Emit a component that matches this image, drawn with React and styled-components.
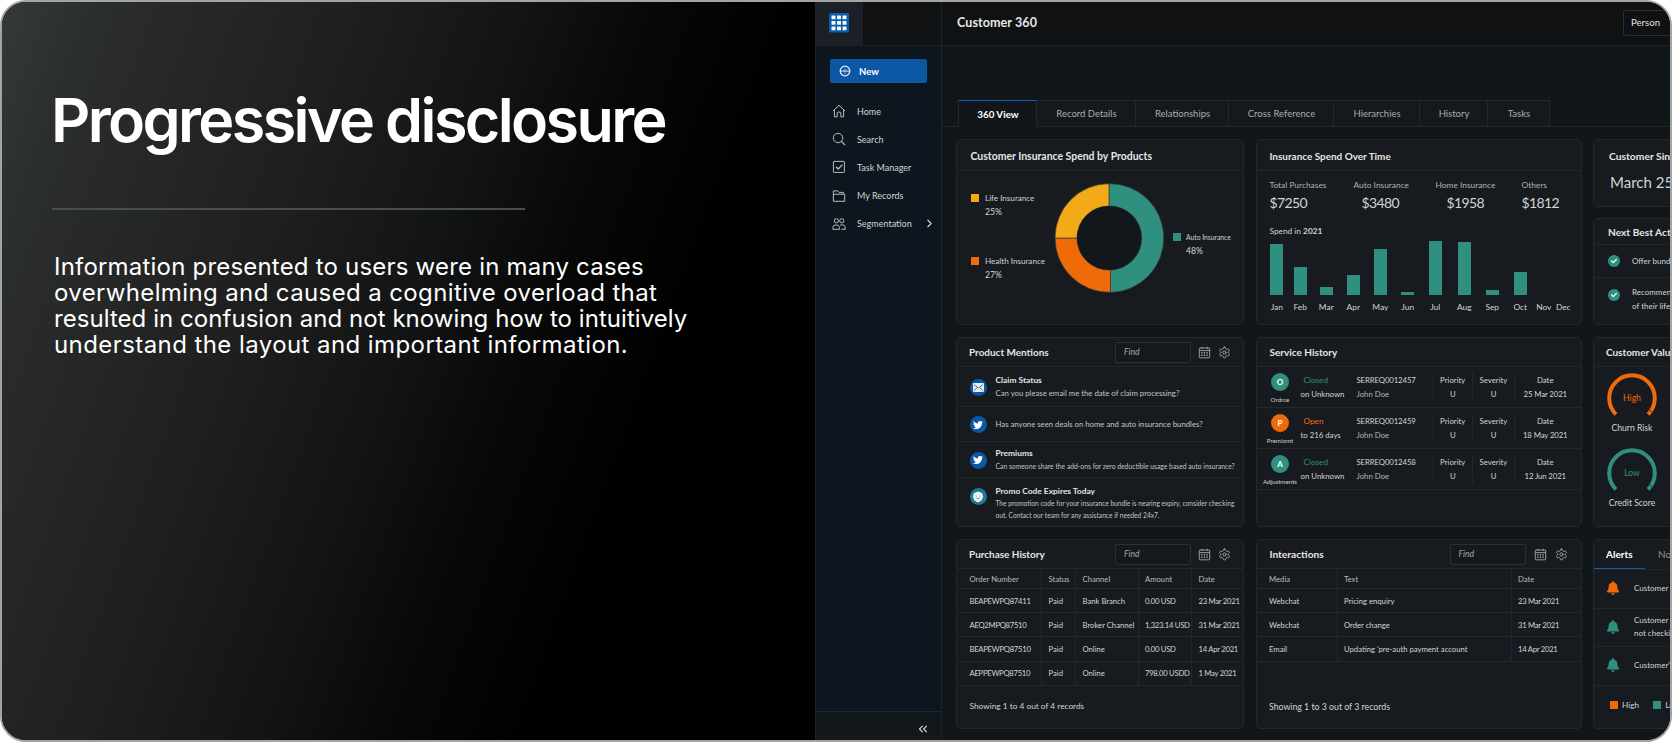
import React from 'react'
import styled, { createGlobalStyle, css } from 'styled-components'
import {
  LuChevronRight,
  LuChevronsLeft,
  LuSettings,
} from 'react-icons/lu'
import { FaTwitter, FaBell, FaCheck } from 'react-icons/fa'

const teal = '#2f9080'
const orange = '#ef6a08'
const yellow = '#f3aa18'
const blue = '#0b57a4'
const line = '#22272a'

const GlobalStyle = createGlobalStyle`
  * {
    box-sizing: border-box;
  }
  body {
    margin: 0;
    background: #fff;
    overflow: hidden;
  }
  h1, h2, h3, p {
    margin: 0;
  }
`

const HomeIcon = () => (
  <NavSvg viewBox="0 0 14 14">
    <path d="M1 7 L7 1.3 L13 7 M2.4 6 V12.8 H5.2 V9 Q5.2 8 7 8 Q8.8 8 8.8 9 V12.8 H11.6 V6" />
  </NavSvg>
)

const SearchIcon = () => (
  <NavSvg viewBox="0 0 14 14">
    <circle cx="6" cy="6" r="4.7" />
    <path d="M9.4 9.4 L13 13" strokeWidth="1.2" />
  </NavSvg>
)

const TaskIcon = () => (
  <NavSvg viewBox="0 0 14 14">
    <rect x="1.4" y="1.4" width="11" height="11" rx="0.6" />
    <path d="M4 6.8 L6.2 9 L10.4 4.6" strokeWidth="1.3" />
  </NavSvg>
)

const FolderIcon = () => (
  <NavSvg viewBox="0 0 14 14">
    <path d="M1.4 12.3 V1.9 H5.6 L7 3.4 H11.4 V5.2 M1.4 12.3 H12.7 V5.2 H3.4 L1.4 6" />
  </NavSvg>
)

const PeopleIcon = () => (
  <NavSvg viewBox="0 0 14 14">
    <circle cx="4.4" cy="3.8" r="2.1" />
    <circle cx="9.8" cy="3.8" r="2.1" />
    <path d="M0.9 12.3 V10.4 Q0.9 7.9 4.2 7.9 Q7.4 7.9 7.4 10.4 V12.3 Z M8.2 8 Q13.2 7.3 13.2 10.4 V12.3 H9.4" />
  </NavSvg>
)

const CalendarIcon = () => (
  <svg width="13" height="13" viewBox="0 0 13 13" fill="none" stroke="currentColor">
    <rect x="1.3" y="2" width="10.4" height="9.8" rx="0.8" strokeWidth="0.9" />
    <path d="M1.3 4.6 H11.7 M3.8 0.8 V3 M9.2 0.8 V3" strokeWidth="0.9" />
    <path d="M3.2 6.7 H10 M3.2 9.2 H10" strokeWidth="1.4" strokeDasharray="1.3 1.3" />
  </svg>
)

const navItems = [
  { icon: HomeIcon, label: 'Home' },
  { icon: SearchIcon, label: 'Search' },
  { icon: TaskIcon, label: 'Task Manager' },
  { icon: FolderIcon, label: 'My Records' },
  { icon: PeopleIcon, label: 'Segmentation', more: true },
]

const tabs = [
  { label: '360 View', width: 79, active: true },
  { label: 'Record Details', width: 99 },
  { label: 'Relationships', width: 93 },
  { label: 'Cross Reference', width: 105 },
  { label: 'Hierarchies', width: 86 },
  { label: 'History', width: 68 },
  { label: 'Tasks', width: 62 },
]

const stats = [
  { label: 'Total Purchases', value: '$7250', width: 84 },
  { label: 'Auto Insurance', value: '$3480', width: 82, indent: 8 },
  { label: 'Home Insurance', value: '$1958', width: 86, indent: 11 },
  { label: 'Others', value: '$1812', width: 50 },
]

const months = [
  { name: 'Jan', value: 51 },
  { name: 'Feb', value: 28 },
  { name: 'Mar', value: 8 },
  { name: 'Apr', value: 20 },
  { name: 'May', value: 46 },
  { name: 'Jun', value: 3 },
  { name: 'Jul', value: 54 },
  { name: 'Aug', value: 53 },
  { name: 'Sep', value: 5 },
  { name: 'Oct', value: 23 },
  { name: 'Nov', value: 0 },
  { name: 'Dec', value: 0 },
]

const services = [
  { letter: 'O', name: 'Ordrce', status: 'Closed', since: 'on Unknown', id: 'SERREQ0012457', date: '25 Mar 2021', color: teal },
  { letter: 'P', name: 'Premiomt', status: 'Open', since: 'to 216 days', id: 'SERREQ0012459', date: '18 May 2021', color: orange },
  { letter: 'A', name: 'Adjustments', status: 'Closed', since: 'on Unknown', id: 'SERREQ0012458', date: '12 Jun 2021', color: teal },
]

const purchases = [
  ['BEAPEWPQ87411', 'Paid', 'Bank Branch', '0.00 USD', '23 Mar 2021'],
  ['AEQ2MPQ87510', 'Paid', 'Broker Channel', '1,323.14 USD', '31 Mar 2021'],
  ['BEAPEWPQ87510', 'Paid', 'Online', '0.00 USD', '14 Apr 2021'],
  ['AEPPEWPQ87510', 'Paid', 'Online', '798.00 USDD', '1 May 2021'],
]

const interactions = [
  ['Webchat', 'Pricing enquiry', '23 Mar 2021'],
  ['Webchat', 'Order change', '31 Mar 2021'],
  ['Email', "Updating 'pre-auth payment account", '14 Apr 2021'],
]

const SearchTools = ({ gap }) => (
  <Tools $gap={gap}>
    <Find>Find</Find>
    <CalendarIcon />
    <LuSettings size={13} strokeWidth={1.8} />
  </Tools>
)

const Table = ({ columns, head, rows }) => (
  <div>
    <TableRow $columns={columns} $head>
      {head.map((cell) => <Cell key={cell}>{cell}</Cell>)}
    </TableRow>
    {rows.map((row, i) => (
      <TableRow $columns={columns} key={i}>
        {row.map((cell, j) => <Cell key={j} $numeric={/\d/.test(cell)}>{cell}</Cell>)}
      </TableRow>
    ))}
  </div>
)

const Donut = () => (
  <svg width="110" height="110" viewBox="-55 -55 110 110">
    <g stroke="#3a3a30" strokeWidth="0.7">
      <path d="M0 -54.3 A54 54.3 0 0 1 1.5 54.3 L1.5 32 A32 32 0 0 0 0 -32 Z" fill={teal} />
      <path d="M1.5 54.3 A54.3 54.3 0 0 1 -54 0 L-32 0 A32 32 0 0 0 1.5 32 Z" fill={orange} />
      <path d="M-54 0 A54 54.3 0 0 1 0 -54.3 L0 -32 A32 32 0 0 0 -32 0 Z" fill={yellow} />
    </g>
    <circle r="31.8" fill="#12171b" />
  </svg>
)

const Gauge = ({ color, level, label }) => (
  <GaugeBox>
    <svg width="52" height="46" viewBox="-26 -26 52 46">
      <path d="M-16 16.4 A22.8 22.8 0 1 1 16 16.4" fill="none" stroke={color} strokeWidth="4" />
      <path d="M16.5 11.5 L20 14" stroke="#1a1d20" strokeWidth="0.7" />
      <text x="0" y="3.2" textAnchor="middle" fontSize="8.6" fill={color}>{level}</text>
    </svg>
    <GaugeLabel>{label}</GaugeLabel>
  </GaugeBox>
)

const Mail = () => (
  <svg width="11" height="9" viewBox="0 0 11 9">
    <rect width="11" height="9" rx="1" fill="#e9eef2" />
    <path d="M1 1.6 L5.5 5 L10 1.6 M1.2 7.7 L4 4.6 M9.8 7.7 L7 4.6" fill="none" stroke="#46616f" strokeWidth="0.9" />
  </svg>
)

const Chat = () => (
  <svg width="12" height="12" viewBox="0 0 12 12">
    <path d="M6 .6 L8 1.2 L10.2 2.2 L11.1 5.6 L9.8 9.2 L6 11.4 L2.2 9.2 L.9 5.6 L1.8 2.2 L4 1.2 Z" fill="#eef2f2" />
    <path d="M4.3 4.6 v1 M7.7 4.6 v1 M4.4 7 Q6 8.4 7.6 7" fill="none" stroke="#5d8f94" strokeWidth="0.9" />
  </svg>
)

const GridLogo = () => (
  <svg width="20" height="20" viewBox="0 0 20 20">
    <rect width="20" height="19.5" rx="1.5" fill="#0d5cad" />
    {[2.5, 8, 13.5].map((y) => [2.5, 8, 13.5].map((x) => (
      <rect key={`${x}-${y}`} x={x} y={y} width="4" height="3.8" rx="0.5" fill="#f2f6fa" />
    )))}
  </svg>
)

const NewIcon = () => (
  <svg width="12" height="12" viewBox="0 0 12 12" fill="none" stroke="#e5edf5">
    <circle cx="6" cy="6" r="4.8" strokeWidth="1.3" />
    <path d="M1 6 h10" strokeWidth="1.2" />
    <path d="M6 3 v6" strokeWidth="0.9" opacity="0.6" />
  </svg>
)

const App = () => {
  return (
    <Frame>
      <GlobalStyle />
      <Intro>
        <Heading>Progressive disclosure</Heading>
        <Rule />
        <Lead>
          <LeadLine $spacing="0.2px">Information presented to users were in many cases</LeadLine>
          <LeadLine $spacing="0.38px">overwhelming and caused a cognitive overload that</LeadLine>
          <LeadLine $spacing="0.05px">resulted in confusion and not knowing how to intuitively</LeadLine>
          <LeadLine $spacing="0.42px">understand the layout and important information.</LeadLine>
        </Lead>
      </Intro>

      <Dashboard>
        <Sidebar>
          <Brand>
            <BrandTile><GridLogo /></BrandTile>
          </Brand>
          <NewButton><NewIcon />New</NewButton>
          <Nav>
            {navItems.map(({ icon: Icon, label, more }) => (
              <NavItem key={label}>
                <Icon />
                <span>{label}</span>
                {more && <LuChevronRight size={13} strokeWidth={2.2} />}
              </NavItem>
            ))}
          </Nav>
          <Collapse><LuChevronsLeft size={14} /></Collapse>
        </Sidebar>

        <Main>
          <TopBar>
            <PageTitle>Customer 360</PageTitle>
            <PersonButton>Person</PersonButton>
          </TopBar>
          <Tabs>
            {tabs.map((tab) => (
              <Tab key={tab.label} $width={tab.width} $active={tab.active}>{tab.label}</Tab>
            ))}
          </Tabs>

          <Board>
            <Card>
              <CardHeader $height={31} $pad={13.5} $top={1}><Title $size={10.45}>Customer Insurance Spend by Products</Title></CardHeader>
              <SpendBody>
                <LegendColumn>
                  <Legend><Swatch $color={yellow} /><div>Life Insurance<Percent>25%</Percent></div></Legend>
                  <Legend><Swatch $color={orange} /><div>Health Insurance<Percent>27%</Percent></div></Legend>
                </LegendColumn>
                <Donut />
                <Legend $small><Swatch $color={teal} /><div>Auto Insurance<Percent>48%</Percent></div></Legend>
              </SpendBody>
            </Card>

            <Card>
              <CardHeader $height={31} $pad={13} $top={1}><Title>Insurance Spend Over Time</Title></CardHeader>
              <Stats>
                {stats.map((s) => (
                  <Stat key={s.label} $width={s.width}>
                    <StatLabel>{s.label}</StatLabel>
                    <StatValue $indent={s.indent}>{s.value}</StatValue>
                  </Stat>
                ))}
              </Stats>
              <ChartTitle>Spend in <b>2021</b></ChartTitle>
              <Chart>
                {months.map((m) => (
                  <Month key={m.name}>
                    <Bar style={{ height: m.value }} />
                    <span>{m.name}</span>
                  </Month>
                ))}
              </Chart>
            </Card>

            <Stack>
              <Card>
                <SinceTitle $size={10.3}>Customer Since</SinceTitle>
                <SinceDate>March 25</SinceDate>
              </Card>
              <Card>
                <CardHeader $height={26} $pad={14}><Title $size={10.2}>Next Best Actions</Title></CardHeader>
                <Action $height={33}><Check><FaCheck size={6} /></Check><span>Offer bundle</span></Action>
                <Action $height={46} $top><Check><FaCheck size={6} /></Check><span>Recommend<br />of their life</span></Action>
              </Card>
            </Stack>

            <Card>
              <CardHeader $height={29} $pad={12}>
                <Title>Product Mentions</Title>
                <SearchTools />
              </CardHeader>
              <Mention $height={40}>
                <Badge><Mail /></Badge>
                <div>
                  <MentionTitle>Claim Status</MentionTitle>
                  <MentionText>Can you please email me the date of claim processing?</MentionText>
                </div>
              </Mention>
              <Mention $height={35}>
                <Badge><FaTwitter size={10} /></Badge>
                <MentionText>Has anyone seen deals on home and auto insurance bundles?</MentionText>
              </Mention>
              <Mention $height={37}>
                <Badge><FaTwitter size={10} /></Badge>
                <div>
                  <MentionTitle>Premiums</MentionTitle>
                  <MentionText $size={6.78}>Can someone share the add-ons for zero deductible usage based auto insurance?</MentionText>
                </div>
              </Mention>
              <Mention $height={48} $top>
                <Badge $ring><Chat /></Badge>
                <div>
                  <MentionTitle>Promo Code Expires Today</MentionTitle>
                  <MentionText $size={6.65} $leading={11.7}>
                    The promotion code for your insurance bundle is nearing expiry, consider checking<br />
                    out. Contact our team for any assistance if needed 24x7.
                  </MentionText>
                </div>
              </Mention>
            </Card>

            <Card>
              <CardHeader $height={29} $pad={13}><Title $size={10}>Service History</Title></CardHeader>
              {services.map((s) => (
                <Service key={s.id}>
                  <ServiceKind>
                    <Avatar $color={s.color}>{s.letter}</Avatar>
                    <span>{s.name}</span>
                  </ServiceKind>
                  <ServiceCell>
                    <Status $color={s.color}>{s.status}</Status>
                    <span>{s.since}</span>
                  </ServiceCell>
                  <ServiceCell><Code>{s.id}</Code><Muted>John Doe</Muted></ServiceCell>
                  <ServiceCell $center><span>Priority</span><span>U</span></ServiceCell>
                  <ServiceCell $center><span>Severity</span><span>U</span></ServiceCell>
                  <ServiceCell $center $last><span>Date</span><Code>{s.date}</Code></ServiceCell>
                </Service>
              ))}
            </Card>

            <Card>
              <CardHeader $height={29} $pad={12}><Title>Customer Value</Title></CardHeader>
              <Gauges>
                <Gauge color={orange} level="High" label="Churn Risk" />
                <Gauge color={teal} level="Low" label="Credit Score" />
              </Gauges>
            </Card>

            <Card>
              <CardHeader $height={29} $pad={12}>
                <Title>Purchase History</Title>
                <SearchTools />
              </CardHeader>
              <Table
                columns="84px 34px 62.5px 53.5px 52px"
                head={['Order Number', 'Status', 'Channel', 'Amount', 'Date']}
                rows={purchases}
              />
              <Records $size={8.3}>Showing 1 to 4 out of 4 records</Records>
            </Card>

            <Card>
              <CardHeader $height={29} $pad={13}>
                <Title $size={10.2}>Interactions</Title>
                <SearchTools gap />
              </CardHeader>
              <Table
                columns="80px 174px 70px"
                head={['Media', 'Text', 'Date']}
                rows={interactions}
              />
              <Records $size={8.75}>Showing 1 to 3 out of 3 records</Records>
            </Card>

            <Card>
              <AlertTabs>
                <AlertTab $active>Alerts</AlertTab>
                <AlertTab>Notes</AlertTab>
              </AlertTabs>
              <Alert><FaBell size={14} color={orange} /><span>Customer</span></Alert>
              <Alert><FaBell size={14} color={teal} /><span>Customer<br />not checking</span></Alert>
              <Alert><FaBell size={14} color={teal} /><span>Customer's</span></Alert>
              <AlertKey>
                <Swatch $color={orange} /><span>High</span>
                <Swatch $color={teal} /><span>Low</span>
              </AlertKey>
            </Card>
          </Board>
        </Main>
      </Dashboard>
    </Frame>
  )
}

const Frame = styled.div`
  display: flex;
  width: 1672px;
  height: 742px;
  border: 2px solid #a3a5a5;
  border-radius: 26px;
  overflow: hidden;
  background: #000;
`

const Intro = styled.section`
  flex: 0 0 813px;
  padding: 80px 0 0 50px;
  font-family: Inter, sans-serif;
  color: #fff;
  background: linear-gradient(110deg, #343939 0%, #2c2f2f 8%, #272828 17%, #1e1e1e 34%, #121314 49%, #080808 60%, #000 74%);
`

const Heading = styled.h1`
  font-size: 61px;
  line-height: 76px;
  font-weight: 600;
  letter-spacing: -2.62px;
  margin-left: -1px;
  white-space: nowrap;
`

const Rule = styled.div`
  width: 473px;
  height: 2px;
  margin-top: 50px;
  background: #484d4e;
`

const Lead = styled.div`
  margin-top: 44px;
  padding-left: 2px;
`

const LeadLine = styled.p`
  font-size: 24px;
  line-height: 26px;
  font-weight: 400;
  letter-spacing: ${(p) => p.$spacing};
  white-space: nowrap;
`

const Dashboard = styled.div`
  flex: 1;
  display: flex;
  min-width: 0;
  font-family: Lato, sans-serif;
  font-size: 8.2px;
  color: #d2d4d5;
  background: #11161a;
`

const Sidebar = styled.aside`
  flex: 0 0 127px;
  display: flex;
  flex-direction: column;
  background: #0d151e;
  border-left: 1px solid #1b2126;
  border-right: 1px solid #1c242b;
`

const Brand = styled.div`
  height: 44px;
  background: #0f1113;
  border-bottom: 1px solid #192026;
`

const BrandTile = styled.div`
  display: flex;
  width: 47px;
  height: 43px;
  padding: 11px 0 0 13px;
  background: #1a2025;
`

const NewButton = styled.button`
  display: flex;
  align-items: center;
  gap: 8px;
  width: 97px;
  height: 24px;
  margin: 13px 0 0 14px;
  padding: 0 0 0 9px;
  border: 0;
  border-radius: 2px;
  background: ${blue};
  color: #fff;
  font: 700 9.5px Lato, sans-serif;
`

const Nav = styled.nav`
  margin-top: 14px;
`

const NavItem = styled.div`
  display: flex;
  align-items: center;
  height: 28.2px;
  padding-left: 16px;
  gap: 11px;
  font-size: 9px;
  white-space: nowrap;

  span {
    flex: 0 0 55px;
  }
`

const NavSvg = styled.svg`
  flex: none;
  width: 14px;
  height: 14px;
  fill: none;
  stroke: #b9bcbf;
  stroke-width: 1;
`

const Collapse = styled.div`
  display: flex;
  justify-content: flex-end;
  height: 29px;
  margin-top: auto;
  padding: 10px 11px 0 0;
  background: #12171c;
  border-top: 1px solid #22272b;
`

const Main = styled.main`
  flex: 1;
  min-width: 0;
`

const TopBar = styled.header`
  display: flex;
  align-items: center;
  justify-content: space-between;
  height: 44px;
  padding: 0 0 2px 15px;
  background: #0f1113;
  border-bottom: 1px solid #1b2227;
`

const PageTitle = styled.h2`
  font-size: 12.5px;
  font-weight: 700;
  letter-spacing: 0.1px;
  color: #e8e9ea;
`

const PersonButton = styled.button`
  width: 47px;
  height: 26px;
  padding: 0 0 0 7px;
  border: 1px solid #2a2f33;
  border-right: 0;
  border-radius: 3px 0 0 3px;
  background: transparent;
  color: #e0e2e3;
  font: 9.6px Lato, sans-serif;
  text-align: left;
`

const Tabs = styled.div`
  display: flex;
  height: 27px;
  margin-top: 54px;

  &::before {
    content: '';
    width: 16px;
    border-bottom: 1px solid ${line};
  }
  &::after {
    content: '';
    flex: 1;
    border-bottom: 1px solid ${line};
  }
`

const Tab = styled.div`
  flex: 0 0 ${(p) => p.$width}px;
  display: flex;
  align-items: center;
  justify-content: center;
  padding-left: 1px;
  font-size: 9.5px;
  color: #a9acae;
  background: #14191d;
  border-top: 1px solid ${line};
  border-right: 1px solid ${line};
  border-bottom: 1px solid ${line};

  ${(p) => p.$active && css`
    font-size: 9.8px;
    font-weight: 700;
    color: #fff;
    background: none;
    border-left: 1px solid ${line};
    border-top: 1px solid #0e5cae;
    border-bottom-color: transparent;
  `}
`

const Board = styled.div`
  display: grid;
  grid-template-columns: 288px 326px 90px;
  grid-template-rows: 186px 190px 190px;
  gap: 12px 11.5px;
  padding: 12px 0 0 14px;
  overflow: hidden;
`

const Card = styled.section`
  display: flex;
  flex-direction: column;
  min-width: 0;
  min-height: 0;
  border: 1px solid #24282b;
  border-radius: 5px;
  background: #171b1f;
  overflow: hidden;
  white-space: nowrap;
`

const Stack = styled.div`
  display: grid;
  grid-template-rows: 68px 107px;
  gap: 11px;
`

const CardHeader = styled.div`
  flex: 0 0 ${(p) => p.$height}px;
  display: flex;
  align-items: center;
  justify-content: space-between;
  padding: ${(p) => p.$top || 0}px 12px 0 ${(p) => p.$pad}px;
  border-bottom: 1px solid ${line};
`

const Title = styled.h3`
  font-size: ${(p) => p.$size || 9.95}px;
  line-height: 14px;
  font-weight: 700;
  color: #e4e5e6;
`

const Tools = styled.div`
  display: flex;
  align-items: center;
  gap: ${(p) => (p.$gap ? 8 : 7)}px;
  padding-right: ${(p) => (p.$gap ? 1 : 0)}px;
  color: #a4a7a9;
`

const Find = styled.div`
  width: 76px;
  height: 21px;
  padding-left: 8px;
  border: 1px solid #2b2f32;
  border-radius: 2px;
  font-size: 8.6px;
  line-height: 19px;
  font-style: italic;
  background: #14191c;
`

const SpendBody = styled.div`
  display: flex;
  align-items: center;
  padding: 12px 0 0 14px;
`

const LegendColumn = styled.div`
  display: flex;
  flex-direction: column;
  gap: 35px;
  width: 83px;
  padding-bottom: 3px;
`

const Legend = styled.div`
  display: flex;
  gap: ${(p) => (p.$small ? 5 : 6)}px;
  font-size: ${(p) => (p.$small ? 6.75 : 8.1)}px;
  line-height: 14px;
  margin-left: ${(p) => (p.$small ? 9 : 0)}px;
  padding-top: ${(p) => (p.$small ? 11 : 0)}px;
`

const Swatch = styled.i`
  flex: 0 0 8px;
  height: 8px;
  margin-top: 3px;
  background: ${(p) => p.$color};
`

const Percent = styled.div`
  font-size: 8.6px;
  line-height: 14px;
`

const Stats = styled.div`
  display: flex;
  padding: 8px 0 0 13px;
`

const Stat = styled.div`
  width: ${(p) => p.$width}px;
`

const StatLabel = styled.div`
  font-size: 8.4px;
  line-height: 13px;
  color: #aeb1b3;
`

const StatValue = styled.div`
  font-size: 14px;
  line-height: 22px;
  letter-spacing: -0.6px;
  padding-left: ${(p) => p.$indent || 0}px;
`

const ChartTitle = styled.div`
  margin: 11px 0 0 13px;
  line-height: 12px;
  font-size: 8.3px;
`

const Chart = styled.div`
  display: grid;
  grid-template-columns: 24.5px 22.5px 29.5px 24.5px 29.5px 25.5px 29.5px 28.5px 27.5px 28.5px 18.5px 20.5px;
  align-items: end;
  height: 77px;
  padding-left: 8px;
`

const Month = styled.div`
  display: flex;
  flex-direction: column;
  align-items: center;
  font-size: 8.4px;

  span {
    line-height: 13px;
    margin-top: 6px;
  }
`

const Bar = styled.div`
  width: 13px;
  background: ${teal};
`

const SinceTitle = styled(Title)`
  padding: 9px 0 0 15px;
`

const SinceDate = styled.div`
  padding: 9px 0 0 16px;
  font-size: 15px;
  line-height: 20px;
`

const Action = styled.div`
  display: flex;
  align-items: ${(p) => (p.$top ? 'flex-start' : 'center')};
  gap: 12px;
  height: ${(p) => p.$height}px;
  padding: ${(p) => (p.$top ? '7px' : '0')} 0 0 14px;
  border-bottom: ${(p) => (p.$top ? 0 : 1)}px solid ${line};
  font-size: 8px;
  line-height: 14px;

  > i {
    margin-top: ${(p) => (p.$top ? 4 : 0)}px;
  }
`

const Check = styled.i`
  flex: 0 0 12px;
  height: 12px;
  display: flex;
  align-items: center;
  justify-content: center;
  border-radius: 50%;
  background: ${teal};
  color: #fff;
`

const Mention = styled.div`
  display: flex;
  align-items: ${(p) => (p.$top ? 'flex-start' : 'center')};
  gap: 9px;
  height: ${(p) => p.$height}px;
  padding: ${(p) => (p.$top ? 7 : 2)}px 0 0 12.5px;
  border-bottom: ${(p) => (p.$top ? 0 : 1)}px solid ${line};
`

const Badge = styled.i`
  flex: 0 0 17px;
  height: 17px;
  margin-top: ${(p) => (p.$ring ? 3 : 0)}px;
  display: flex;
  align-items: center;
  justify-content: center;
  border-radius: 50%;
  background: ${(p) => (p.$ring ? '#1c7894' : blue)};
  color: #fff;
`

const MentionTitle = styled.div`
  font-size: 8.4px;
  line-height: 13px;
  font-weight: 700;
  color: #e4e5e6;
`

const MentionText = styled.div`
  font-size: ${(p) => p.$size || 7.75}px;
  line-height: ${(p) => p.$leading || 13}px;
  color: #c2c4c6;
`

const Service = styled.div`
  display: grid;
  grid-template-columns: 44px 56px 76px 39.5px 42px 1fr;
  align-items: center;
  height: 41px;
  border-bottom: 1px solid ${line};
`

const ServiceKind = styled.div`
  display: flex;
  flex-direction: column;
  align-items: center;
  align-self: start;
  gap: 3px;
  padding: 6px 0 0 3px;
  font-size: 6.2px;
  line-height: 12px;
`

const Avatar = styled.i`
  width: 18px;
  height: 18px;
  border-radius: 50%;
  background: ${(p) => p.$color};
  color: #fff;
  font: 700 8px/18px Lato, sans-serif;
  text-align: center;
`

const ServiceCell = styled.div`
  display: flex;
  flex-direction: column;
  padding-top: 1px;
  font-size: 7.8px;
  line-height: 13.5px;

  ${(p) => p.$center && css`
    align-items: center;
    padding-right: ${p.$last ? 5 : 0}px;
    border-left: 1px solid ${line};
  `}
`

const Code = styled.span`
  letter-spacing: -0.12px;
`

const Status = styled.span`
  padding-left: 3px;
  font-size: 8.2px;
  color: ${(p) => p.$color};
`

const Muted = styled.span`
  color: #b3b6b8;
`

const Gauges = styled.div`
  padding: 5px 0 0 12px;
`

const GaugeBox = styled.div`
  display: flex;
  flex-direction: column;
  align-items: center;
  width: 52px;
  height: 75px;
`

const GaugeLabel = styled.div`
  margin-top: 4px;
  font-size: 8.6px;
  line-height: 13px;
`

const TableRow = styled.div`
  display: grid;
  grid-template-columns: ${(p) => p.$columns};
  height: ${(p) => (p.$head ? 20 : 24.2)}px;
  border-bottom: 1px solid ${line};
  color: ${(p) => (p.$head ? '#b9bcbe' : '#d2d4d5')};
`

const Cell = styled.div`
  display: flex;
  align-items: center;
  padding-left: 6.5px;
  font-size: 7.7px;
  letter-spacing: ${(p) => (p.$numeric ? -0.28 : 0)}px;

  & + & {
    border-left: 1px solid ${line};
  }
  &:first-child {
    padding-left: 12.5px;
  }
`

const Records = styled.div`
  margin-top: auto;
  padding: 0 0 15px 12.5px;
  font-size: ${(p) => p.$size}px;
  line-height: 13px;
`

const AlertTabs = styled.div`
  display: flex;
  flex: 0 0 29px;
  border-bottom: 1px solid ${line};
`

const AlertTab = styled.div`
  flex: none;
  padding: 0 13px;
  font-size: 10px;
  line-height: 28px;
  color: #8d9194;

  ${(p) => p.$active && css`
    width: 51px;
    padding: 0 0 0 12px;
    font-weight: 700;
    color: #fff;
    border-bottom: 1px solid #0e5cae;
  `}
`

const Alert = styled.div`
  display: flex;
  align-items: center;
  gap: 14px;
  height: 38.5px;
  padding: 0 0 1px 12px;
  border-bottom: 1px solid ${line};
  font-size: 8px;
  line-height: 12.5px;

  svg {
    flex: none;
  }
`

const AlertKey = styled.div`
  display: flex;
  align-items: center;
  gap: 4px;
  padding: 14px 0 0 16px;
  font-size: 8.3px;

  i {
    margin-top: 0;
  }
  span + i {
    margin-left: 10px;
  }
`

export default App
